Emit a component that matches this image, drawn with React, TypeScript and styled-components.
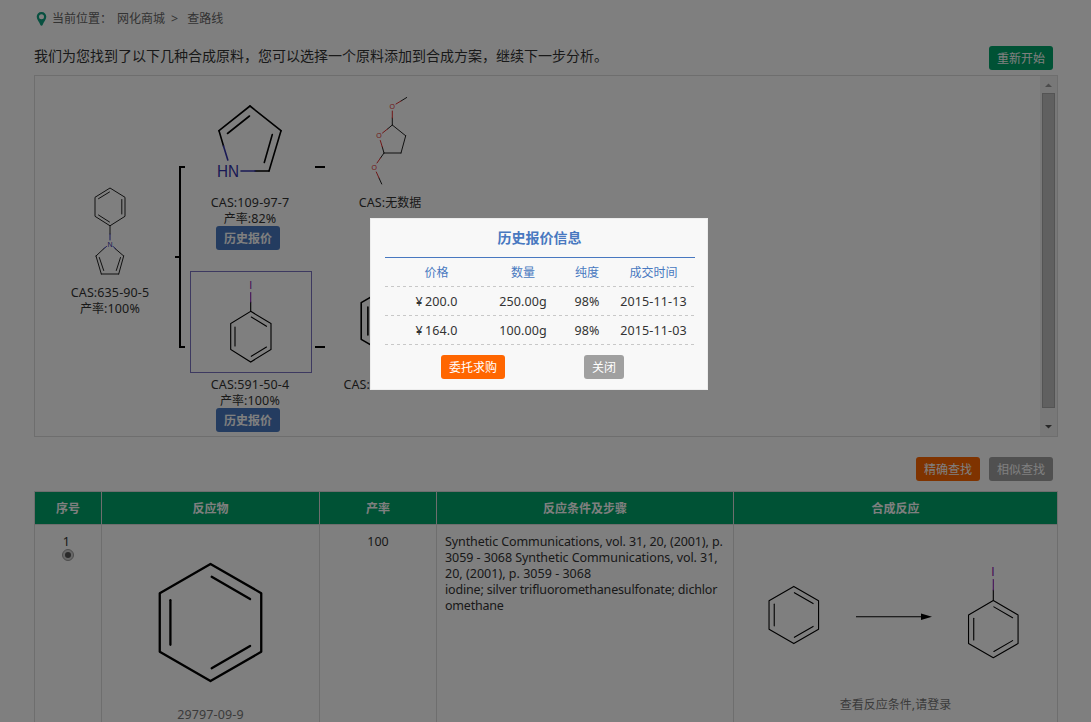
import React from 'react';
import styled, { createGlobalStyle, css } from 'styled-components';

const Global = createGlobalStyle`
  * { box-sizing: border-box; }
  html, body { height: 100%; }
  body {
    margin: 0;
    overflow: hidden;
    background: #fff;
    color: #333;
    font: 12px/16px "Noto Sans CJK SC", sans-serif;
  }
`;

const Page = styled.div`
  width: 1024px;
  height: 722px;
  margin-left: 34px;
  overflow: hidden;
  display: flex;
  flex-direction: column;
`;

const Latin = styled.span<{ $spacing?: number }>`
  font-family: "Noto Sans", "Noto Sans CJK SC", sans-serif;
  font-size: 12.5px;
  letter-spacing: ${(p) => p.$spacing ?? 0.12}px;
  white-space: nowrap;
`;

const Crumbs = styled.nav`
  display: flex;
  align-items: center;
  height: 38px;
  padding-left: 2px;
  color: #666;
`;
const CrumbLabel = styled.span<{ $gap: number }>`
  margin: 0 0 2px ${(p) => p.$gap}px;
`;

const Intro = styled.header`
  display: flex;
  align-items: center;
  justify-content: space-between;
  height: 37px;
  padding: 2px 5px 0 0;
`;
const IntroText = styled.p`
  margin: 0 0 5px;
  font-size: 14px;
`;

const tones = { green: '#00a46a', orange: '#ff6600', gray: '#a0a0a0', blue: '#4878c0' };
const Button = styled.button<{ $tone: keyof typeof tones; $bold?: boolean; $width?: number }>`
  flex: none;
  width: ${(p) => p.$width ?? 64}px;
  height: 24px;
  padding: 0;
  border: 0;
  border-radius: 3px;
  background: ${(p) => tones[p.$tone]};
  color: #fff;
  font: ${(p) => (p.$bold ? 700 : 400)} 12px/24px "Noto Sans CJK SC", sans-serif;
`;

const Panel = styled.section`
  display: flex;
  justify-content: space-between;
  height: 362px;
  border: 1px solid #dcdcdc;
`;
const Tree = styled.div`
  display: flex;
  align-items: flex-start;
  padding: 13px 0 0 14px;
`;
const Column = styled.div<{ $drop?: number }>`
  display: flex;
  flex-direction: column;
  gap: 21px;
  padding-top: ${(p) => p.$drop ?? 0}px;
`;
const Tile = styled.div`
  display: flex;
  flex-direction: column;
  align-items: center;
  width: 122px;
  min-height: 161px;
  white-space: nowrap;
`;
const Frame = styled.div<{ $selected?: boolean }>`
  width: 122px;
  height: 102px;
  margin-bottom: 3px;
  border: 1px solid ${(p) => (p.$selected ? '#7a72c0' : 'transparent')};
`;
const Line = styled.div<{ $inset?: number }>`
  height: 16px;
  padding-right: ${(p) => p.$inset ?? 0}px;
`;
const TileButton = styled(Button)`
  margin-right: 6px;
`;
const Links = styled.svg<{ $before: number; $after: number }>`
  flex: none;
  margin: 0 ${(p) => p.$after}px 0 ${(p) => p.$before}px;
`;
const Drawing = styled.svg`
  display: block;
  flex: none;
`;

const Scrollbar = styled.div`
  display: flex;
  flex-direction: column;
  align-items: center;
  width: 17px;
  background: #f1f1f1;
`;
const Arrow = styled.svg`
  flex: none;
`;
const Thumb = styled.div`
  width: 13px;
  height: 315px;
  background: #c1c1c1;
  border: 1px solid #a8a8a8;
`;

const Actions = styled.div`
  display: flex;
  justify-content: flex-end;
  gap: 9px;
  padding: 20px 5px 10px 0;
`;

const Table = styled.div`
  display: grid;
  grid-template-columns: 68px 218px 117px 297px 324px;
  grid-template-rows: 34px 1fr;
  flex: 1;
`;
const cell = css`
  border-right: 1px solid #dcdcdc;
  &:nth-child(5n + 1) { border-left: 1px solid #dcdcdc; }
`;
const Head = styled.div`
  ${cell}
  border-top: 1px solid #dcdcdc;
  border-bottom: 1px solid #dcdcdc;
  background: #00a46a;
  color: #fff;
  font-weight: 700;
  line-height: 32px;
  text-align: center;
`;
const Cell = styled.div<{ $left?: boolean; $top?: number }>`
  ${cell}
  display: flex;
  flex-direction: column;
  align-items: ${(p) => (p.$left ? 'flex-start' : 'center')};
  padding: ${(p) => p.$top ?? 8}px 0 0 ${(p) => (p.$left ? 8 : 0)}px;
  min-width: 0;
`;
const RowNumber = styled.div`
  padding-right: 3px;
  height: 16px;
`;
const Radio = styled.span`
  display: flex;
  align-items: center;
  justify-content: center;
  width: 12px;
  height: 12px;
  border: 1px solid #999;
  border-radius: 50%;
  background: #d0d0d0;
  &::after {
    content: "";
    width: 6px;
    height: 6px;
    border-radius: 50%;
    background: #555;
  }
`;
const Muted = styled.div`
  color: #777;
  height: 16px;
`;

const Shade = styled.div`
  position: fixed;
  inset: 0;
  background: rgba(0, 0, 0, 0.5);
`;
const Dialog = styled.div`
  position: fixed;
  left: 370px;
  top: 218px;
  width: 338px;
  height: 172px;
  padding: 0 12px 0 14px;
  border: 1px solid #ededed;
  background: #f8f8f8;
`;
const DialogTitle = styled.h2`
  height: 39px;
  margin: 0;
  padding-right: 1px;
  border-bottom: 1px solid #4878c0;
  color: #4878c0;
  font-size: 14px;
  line-height: 36px;
  text-align: center;
`;
const DialogBody = styled.div`
  width: 310px;
`;
const QuoteRow = styled.div<{ $head?: boolean }>`
  display: grid;
  grid-template-columns: 103px 70px 58px 75px;
  height: 29px;
  line-height: ${(p) => (p.$head ? 28 : 30)}px;
  text-align: center;
  background: repeating-linear-gradient(90deg, #c8c8c8 0 3px, transparent 3px 6px) 0 100% / 100% 1px no-repeat;
  color: ${(p) => (p.$head ? '#4878c0' : '#333')};
`;
const DialogActions = styled.div`
  display: flex;
  gap: 79px;
  padding: 10px 0 0 56px;
`;

type Seg = [number, number, number, number];
function Bonds({ lines, color = '#000', width = 1 }: { lines: Seg[]; color?: string; width?: number }) {
  return (
    <g stroke={color} strokeWidth={width} strokeLinecap="round">
      {lines.map(([x1, y1, x2, y2], i) => (
        <line key={i} x1={x1} y1={y1} x2={x2} y2={y2} />
      ))}
    </g>
  );
}

type AtomProps = { x: number; y: number; size: number; color: string; length?: number; children: string };
function Atom({ x, y, size, color, length, children }: AtomProps) {
  return (
    <text
      x={x}
      y={y}
      fontSize={size}
      fill={color}
      textAnchor="middle"
      textLength={length}
      lengthAdjust="spacingAndGlyphs"
      fontFamily="Liberation Sans, sans-serif"
    >
      {children}
    </text>
  );
}

/* Benzene ring with its three inner bonds, centred on (cx, cy). */
function Ring({ cx, cy, r, width }: { cx: number; cy: number; r: number; width: number }) {
  const w = r * 0.866;
  const h = r / 2;
  const inner: Seg[] = [
    [cx - w * 0.79, cy - r * 0.38, cx - w * 0.79, cy + r * 0.38],
    [cx + r * 0.02, cy - r * 0.78, cx + w * 0.78, cy - r * 0.4],
    [cx + r * 0.02, cy + r * 0.78, cx + w * 0.78, cy + r * 0.4],
  ];
  return (
    <>
      <polygon
        points={`${cx},${cy - r} ${cx + w},${cy - h} ${cx + w},${cy + h} ${cx},${cy + r} ${cx - w},${cy + h} ${cx - w},${cy - h}`}
        fill="none"
        stroke="#000"
        strokeWidth={width}
        strokeLinejoin="round"
      />
      <Bonds lines={inner} width={width} />
    </>
  );
}

const NITROGEN = '#3333aa';
const OXYGEN = '#e03030';
const IODINE = '#8820b0';

const PhenylPyrrole = () => (
  <Drawing width="120" height="100" viewBox="50 180 120 100">
    <polygon points="110,188 125,197.3 125,216.3 110,225.8 95,216.3 95,197.3" fill="none" stroke="#222" />
    <Bonds
      color="#222"
      lines={[
        [98.5, 198.7, 109.5, 192],
        [121.8, 199.5, 121.8, 214],
        [98.5, 215, 109.5, 222],
        [110, 226, 110, 234],
        [104, 248.5, 96, 256],
        [96, 256, 101.3, 274],
        [101.3, 274, 118.7, 274],
        [118.7, 274, 123.7, 256],
        [123.7, 256, 115, 248.5],
        [99.3, 257.5, 103.7, 270.5],
        [120.5, 257.5, 116.3, 270.5],
      ]}
    />
    <Bonds color={NITROGEN} lines={[[110, 234, 110, 240], [106.5, 246.5, 104, 248.5], [113.2, 246.5, 115.5, 248.8]]} />
    <Atom x={110} y={247} size={7} color={NITROGEN}>N</Atom>
  </Drawing>
);

const Pyrrole = () => (
  <Drawing width="120" height="100" viewBox="191 90 120 100">
    <Bonds
      width={1.6}
      lines={[
        [250, 106, 219, 130.7],
        [250, 106, 281, 130.7],
        [281, 130.7, 269, 171],
        [269, 171, 255, 171],
        [219, 130.7, 223.5, 146],
        [227.5, 133.5, 249.5, 116],
        [272.3, 134.5, 264.3, 162.5],
      ]}
    />
    <Bonds width={1.6} color={NITROGEN} lines={[[223.5, 146, 227.8, 160], [241, 171, 255, 171]]} />
    <Atom x={228} y={177} size={16.5} length={22} color={NITROGEN}>HN</Atom>
  </Drawing>
);

const IodoBenzene = () => (
  <Drawing width="120" height="100" viewBox="191 272 120 100">
    <polygon points="250.7,311.3 271,323.5 271,349.5 250.7,362 230.7,349.5 230.7,323.5" fill="none" stroke="#000" strokeWidth="1.1" />
    <Bonds
      width={1.1}
      lines={[
        [250.7, 302, 250.7, 311],
        [235, 327, 235, 346],
        [251.3, 317, 266.5, 326.3],
        [251.3, 356.3, 266.5, 347],
      ]}
    />
    <Bonds color={IODINE} width={1.1} lines={[[250.7, 292.5, 250.7, 302]]} />
    <Atom x={250.7} y={289} size={10.5} color={IODINE}>I</Atom>
  </Drawing>
);

const Dimethoxy = () => (
  <Drawing width="120" height="100" viewBox="330 90 120 100">
    <Bonds
      color="#222"
      lines={[
        [406.7, 97.5, 401, 101],
        [392.3, 118, 392.3, 125],
        [392.3, 125, 405.7, 135.8],
        [405.7, 135.8, 401, 153],
        [401, 153, 384, 153],
        [392.3, 125, 387.5, 129],
        [384, 153, 382.3, 147],
        [384, 153, 380.5, 158],
        [379, 178, 381.7, 184],
      ]}
    />
    <Bonds
      color={OXYGEN}
      lines={[
        [401, 101, 396, 104],
        [392.3, 111, 392.3, 118],
        [387.5, 129, 382.5, 133],
        [382.3, 147, 380.3, 140.5],
        [380.5, 158, 377, 163],
        [376.3, 172, 379, 178],
      ]}
    />
    <Atom x={392.3} y={109} size={7} color={OXYGEN}>O</Atom>
    <Atom x={379} y={138} size={7} color={OXYGEN}>O</Atom>
    <Atom x={374.3} y={170} size={7} color={OXYGEN}>O</Atom>
  </Drawing>
);

const SmallBenzene = () => (
  <Drawing width="120" height="100" viewBox="330 272 120 100">
    <Ring cx={393} cy={321} r={36.7} width={1.6} />
  </Drawing>
);

const quotes = [
  ['¥\u2009200.0', '250.00g', '98%', '2015-11-13'],
  ['¥\u2009164.0', '100.00g', '98%', '2015-11-03'],
];

export default function App() {
  return (
    <>
      <Global />
      <Page>
        <Crumbs>
          <svg width="11" height="14" viewBox="0 0 11 14">
            <path fillRule="evenodd" fill="#10a080" d="M5.500 0C2.500 0 .7 2.100.7 4.800c0 2.900 2.600 5.200 3.700 8.300.3.8 1.900.8 2.200 0 1.100-3.100 3.700-5.400 3.700-8.300C10.300 2.100 8.500 0 5.500 0Zm0 2.200a2.500 2.500 0 1 1 0 5 2.500 2.500 0 0 1 0-5Z" />
          </svg>
          <CrumbLabel $gap={5}>当前位置：</CrumbLabel>
          <CrumbLabel $gap={5}>网化商城</CrumbLabel>
          <CrumbLabel $gap={6}><Latin>&gt;</Latin></CrumbLabel>
          <CrumbLabel $gap={9}>查路线</CrumbLabel>
        </Crumbs>
        <Intro>
          <IntroText>我们为您找到了以下几种合成原料，您可以选择一个原料添加到合成方案，继续下一步分析。</IntroText>
          <Button $tone="green">重新开始</Button>
        </Intro>
        <Panel>
          <Tree>
            <Column $drop={90}>
              <Tile>
                <Frame><PhenylPyrrole /></Frame>
                <Line><Latin>CAS:635-90-5</Latin></Line>
                <Line>产率<Latin>:100%</Latin></Line>
              </Tile>
            </Column>
            <Links $before={4} $after={5} width="10" height="343" viewBox="175 89 10 343">
              <path d="M185 167h-5v180h5M175 257h5" fill="none" stroke="#000" strokeWidth="2" />
            </Links>
            <Column>
              <Tile>
                <Frame><Pyrrole /></Frame>
                <Line $inset={2}><Latin>CAS:109-97-7</Latin></Line>
                <Line $inset={2}>产率<Latin>:82%</Latin></Line>
                <TileButton $tone="blue" $bold>历史报价</TileButton>
              </Tile>
              <Tile>
                <Frame $selected><IodoBenzene /></Frame>
                <Line $inset={2}><Latin>CAS:591-50-4</Latin></Line>
                <Line $inset={2}>产率<Latin>:100%</Latin></Line>
                <TileButton $tone="blue" $bold>历史报价</TileButton>
              </Tile>
            </Column>
            <Links $before={3} $after={4} width="10" height="343" viewBox="315 89 10 343">
              <path d="M315 167h10M315 347h10" stroke="#000" strokeWidth="2" />
            </Links>
            <Column>
              <Tile>
                <Frame><Dimethoxy /></Frame>
                <Line><Latin>CAS:</Latin>无数据</Line>
              </Tile>
              <Tile>
                <Frame><SmallBenzene /></Frame>
                <Line><Latin>CAS:29797-09-9</Latin></Line>
              </Tile>
            </Column>
          </Tree>
          <Scrollbar>
            <Arrow width="17" height="17" viewBox="0 0 17 17"><path d="M5 11h7L8.500 7.500Z" fill="#999" /></Arrow>
            <Thumb />
            <Arrow width="17" height="28" viewBox="0 0 17 28"><path d="M5 17h7L8.500 20.500Z" fill="#505050" /></Arrow>
          </Scrollbar>
        </Panel>
        <Actions>
          <Button $tone="orange">精确查找</Button>
          <Button $tone="gray">相似查找</Button>
        </Actions>
        <Table>
          <Head>序号</Head>
          <Head>反应物</Head>
          <Head>产率</Head>
          <Head>反应条件及步骤</Head>
          <Head>合成反应</Head>
          <Cell>
            <RowNumber><Latin>1</Latin></RowNumber>
            <Radio />
          </Cell>
          <Cell>
            <Drawing width="201" height="173" viewBox="110 533 201 173">
              <Ring cx={210.5} cy={622.5} r={58.6} width={2.3} />
            </Drawing>
            <Muted><Latin>29797-09-9</Latin></Muted>
          </Cell>
          <Cell $top={9}><Latin $spacing={0}>100</Latin></Cell>
          <Cell $left $top={9}>
            <Latin $spacing={-0.1}>Synthetic Communications, vol. 31, 20, (2001), p.</Latin>
            <Latin $spacing={-0.07}>3059 - 3068 Synthetic Communications, vol. 31,</Latin>
            <Latin $spacing={0.02}>20, (2001), p. 3059 - 3068</Latin>
            <Latin $spacing={-0.17}>iodine; silver trifluoromethanesulfonate; dichlor</Latin>
            <Latin $spacing={-0.22}>omethane</Latin>
          </Cell>
          <Cell>
            <Drawing width="301" height="163" viewBox="745 533 301 163">
              <Ring cx={793.8} cy={615} r={28.6} width={1.1} />
              <path d="M856 616.700H922" stroke="#000" strokeWidth="1.100" />
              <path d="M921 613.500L932 616.700L921 620Z" />
              <Ring cx={993.3} cy={629.2} r={28.6} width={1.1} />
              <Bonds width={1.1} lines={[[993.3, 590, 993.3, 600.5]]} />
              <Bonds width={1.1} color={IODINE} lines={[[993.3, 579.5, 993.3, 590]]} />
              <Atom x={992.8} y={576} size={12} color={IODINE}>I</Atom>
            </Drawing>
            <Muted>查看反应条件<Latin>,</Latin>请登录</Muted>
          </Cell>
        </Table>
      </Page>
      <Shade />
      <Dialog role="dialog">
        <DialogBody>
          <DialogTitle>历史报价信息</DialogTitle>
          <QuoteRow $head>
            <span>价格</span>
            <span>数量</span>
            <span>纯度</span>
            <span>成交时间</span>
          </QuoteRow>
          {quotes.map((q) => (
            <QuoteRow key={q[3]}>
              {q.map((v) => (
                <Latin key={v}>{v}</Latin>
              ))}
            </QuoteRow>
          ))}
          <DialogActions>
            <Button $tone="orange">委托求购</Button>
            <Button $tone="gray" $width={40}>关闭</Button>
          </DialogActions>
        </DialogBody>
      </Dialog>
    </>
  );
}
